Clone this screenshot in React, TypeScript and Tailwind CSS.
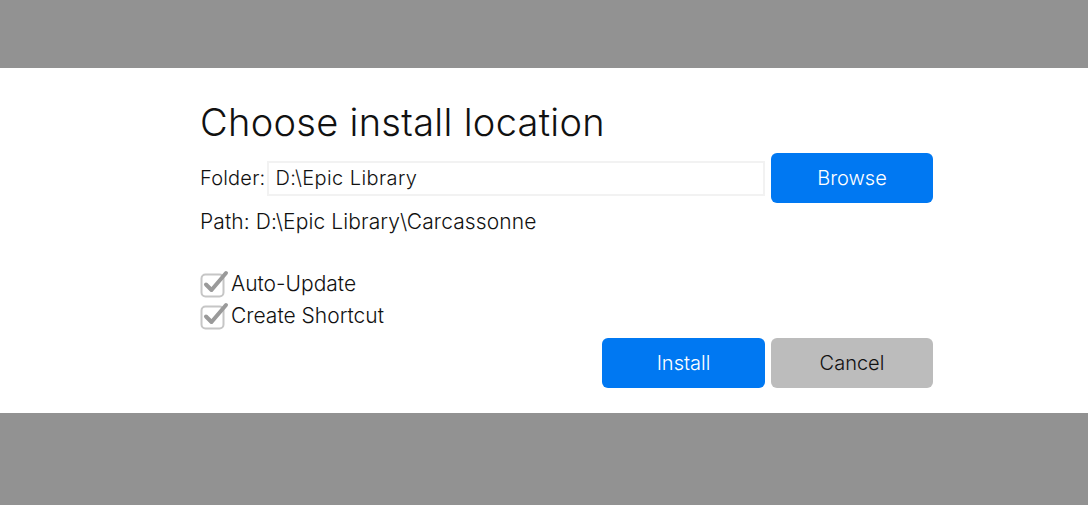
import React from "react";

function CheckIcon() {
  return (
    <svg width="30" height="28" viewBox="0 0 30 28" className="shrink-0">
      <rect x="1.5" y="4.5" width="22" height="22" rx="4" fill="white" stroke="#c6c6c6" strokeWidth="2" />
      <path d="M6 14.5 L11.5 20 L26 3" fill="none" stroke="#9a9a9a" strokeWidth="4" strokeLinecap="round" strokeLinejoin="round" />
    </svg>
  );
}

export default function App() {
  const font = { fontFamily: "Inter, 'Liberation Sans', sans-serif" };
  return (
    <div className="w-[1088px] h-[505px] bg-[#929292] flex flex-col" style={font}>
      <div className="h-[68px]" />
      <div className="h-[345px] bg-white">
        <div className="w-[733px] ml-[200px] flex flex-col">
          <h1 className="text-[38px] font-light text-[#111] leading-none mt-[35px] tracking-[0.3px]">
            Choose install location
          </h1>

          {/* Folder row */}
          <div className="flex items-center mt-[12px] h-[50px]">
            <span className="text-[20px] font-light text-[#111] tracking-[0.2px]">Folder:</span>
            <div className="ml-[2px] flex-1 h-[35px] border-2 border-[#f2f2f2] flex items-center px-[6px] text-[20px] font-light text-[#111] tracking-[0.4px]">
              D:\Epic Library
            </div>
            <button className="ml-[6px] w-[162px] h-[50px] rounded-[6px] bg-[#0078f2] text-white text-[20px] font-light">
              Browse
            </button>
          </div>

          <p className="text-[21px] font-light text-[#111] mt-[6px] leading-[26px] tracking-[0.1px]">
            Path: D:\Epic Library\Carcassonne
          </p>

          {/* Options */}
          <div className="flex flex-col mt-[35px] gap-[4px]">
            <label className="flex items-center gap-[1px] h-[28px] text-[21px] font-light text-[#111]">
              <CheckIcon />
              Auto-Update
            </label>
            <label className="flex items-center gap-[1px] h-[28px] text-[21px] font-light text-[#111]">
              <CheckIcon />
              Create Shortcut
            </label>
          </div>

          <div className="flex justify-end gap-[6px] mt-[8px]">
            <button className="w-[163px] h-[50px] rounded-[6px] bg-[#0078f2] text-white text-[20px] font-light">
              Install
            </button>
            <button className="w-[162px] h-[50px] rounded-[6px] bg-[#bcbcbc] text-[#111] text-[20px] font-light">
              Cancel
            </button>
          </div>
        </div>
      </div>
    </div>
  );
}
